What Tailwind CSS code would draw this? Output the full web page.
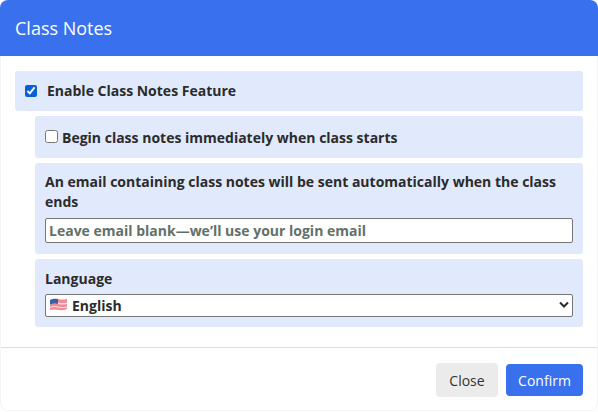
<!DOCTYPE html>
<html lang="en">
  <head>
    <meta charset="UTF-8" />
    <title>Class Notes</title>
    <script src="https://cdn.jsdelivr.net/npm/@tailwindcss/browser@4"></script>
  </head>
  <body class="bg-white font-['Open_Sans','Noto_Sans',sans-serif] text-[#2b2b2b] overflow-hidden">
    <div class="w-[598px] h-[411px] bg-white rounded-[8px] border border-[#f5f5f5] flex flex-col">
      <header class="h-[56px] -mx-px -mt-px bg-[#3870ee] rounded-t-[8px] text-white text-[18px] pl-[15px] flex items-center">
        Class Notes
      </header>

      <div class="pt-[15px] px-[14px] h-[292px] border-b border-[#dedede] flex flex-col gap-[5px] text-[14px] font-bold">
        <label class="h-[40px] bg-[#e1eafc] rounded-[3px] flex items-center pl-[10px] gap-[10px]">
          <input type="checkbox" checked class="w-[12px] h-[12px] m-0 -mt-px accent-[#0b5fd6]" />
          <span class="-mt-px">Enable Class Notes Feature</span>
        </label>

        <div class="ml-[20px] flex flex-col gap-[5px]">
          <label class="h-[42px] bg-[#e1eafc] rounded-[3px] flex items-center pl-[10px] gap-[4px]">
            <input type="checkbox" class="w-[13px] h-[13px] m-0 -mt-px" />
            <span>Begin class notes immediately when class starts</span>
          </label>

          <div class="h-[91px] bg-[#e1eafc] rounded-[3px] px-[10px] pt-[9px]">
            <p class="leading-[20px]">An email containing class notes will be sent automatically when the class ends</p>
            <input
              type="text"
              placeholder="Leave email blank—we’ll use your login email"
              class="mt-[6px] w-full h-[25px] bg-white border border-[#767676] rounded-[2px] px-[3px] font-bold placeholder:text-[#62706a] outline-none"
            />
          </div>

          <div class="h-[68px] bg-[#e1eafc] rounded-[3px] px-[10px] pt-[10px]">
            <p class="leading-[20px]">Language</p>
            <div class="relative mt-[5px]">
              <select class="appearance-none w-full h-[23px] bg-white border border-[#767676] rounded-[2px] pl-[26px] font-bold outline-none">
                <option>English</option>
              </select>
              <svg class="absolute left-[5px] top-[4px] pointer-events-none" width="17" height="13" viewBox="0 0 17 13">
                <path d="M0 2 Q4 0 8 1 T17 1 V11 Q13 13 9 12 T0 12 Z" fill="#ef8b94" />
                <path d="M0 5 Q4 3.5 8 4.5 T17 4.5 V6 Q13 7 8 6 T0 6.5 Z M0 9 Q4 7.5 8 8.5 T17 8.5 V9.5 Q13 10.5 8 9.5 T0 10 Z" fill="#f7dfe2" />
                <path d="M0 2 Q4 0 8 1 V6 Q4 5 0 6.5 Z" fill="#3d5fa8" />
              </svg>
              <svg class="absolute right-[4px] top-[7px] pointer-events-none" width="10" height="8" viewBox="0 0 10 8" fill="none" stroke="#2b2b2b" stroke-width="2">
                <path d="M1 1.5 L5 5.5 L9 1.5" />
              </svg>
            </div>
          </div>
        </div>
      </div>

      <footer class="flex-1 flex justify-end items-start gap-[8px] pt-[15px] pr-[14px] text-[14px]">
        <button class="w-[62px] h-[34px] bg-[#ebebeb] text-[#333333] rounded-[4px]">Close</button>
        <button class="w-[77px] h-[32px] mt-px bg-[#3870ee] text-white rounded-[4px]">Confirm</button>
      </footer>
    </div>
  </body>
</html>
